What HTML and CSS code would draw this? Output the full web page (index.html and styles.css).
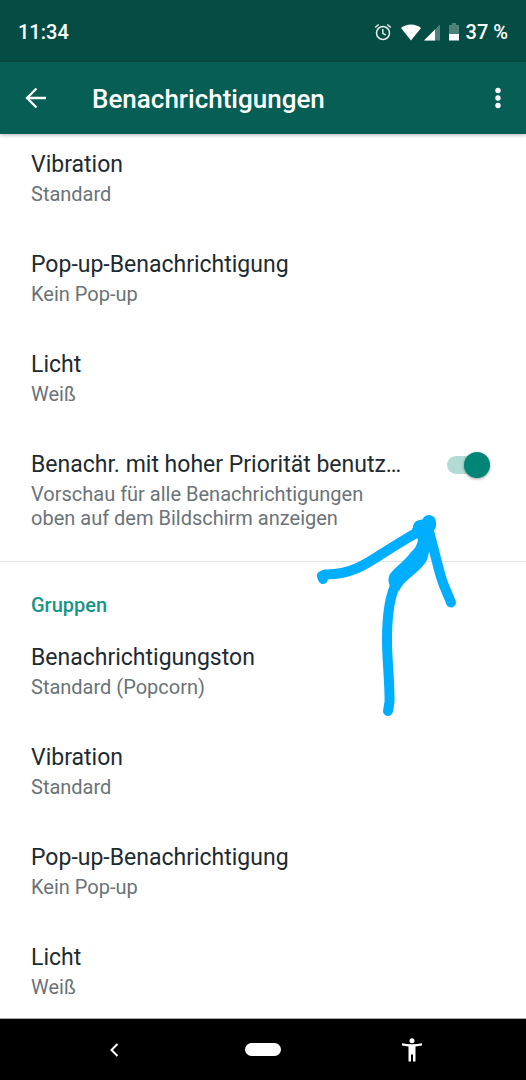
FILE: index.html
```html
<!DOCTYPE html>
<html lang="de">
<head>
<meta charset="utf-8">
<meta name="viewport" content="width=device-width, initial-scale=1">
<title>Benachrichtigungen</title>
<link rel="stylesheet" href="styles.css">
</head>
<body>
<div class="status-bar">
  <span class="clock">11:34</span>
  <div class="status-icons">
    <svg class="alarm" width="18" height="18" viewBox="0 0 18 18" fill="none" stroke="#e6efee" stroke-width="1.5" aria-hidden="true">
      <circle cx="9" cy="10" r="6.5"/><path d="M8.8 6v4.4l3 1.8M1.2 4.5l3.500-3M16.800 4.500l-3.500-3"/>
    </svg>
    <svg class="wifi" width="20" height="17" viewBox="0 0 20 17" aria-hidden="true"><path fill="#fff" d="M10 16.500 0 4Q4 .5 10 .5T20 4z"/></svg>
    <svg class="signal" width="16" height="17" viewBox="0 0 16 17" aria-hidden="true"><path fill="#fff" fill-opacity=".3" d="M16 .5V16.500H0z"/><path fill="#fff" d="M11 5.500v11H0z"/></svg>
    <svg class="battery" width="10" height="18" viewBox="0 0 10 18" aria-hidden="true"><path fill="#fff" fill-opacity=".3" d="M3 0h4v2h3v10H0V2h3z"/><path fill="#fff" d="M0 11h10v6.500H0z"/></svg>
    <span class="level">37 %</span>
  </div>
</div>
<header class="app-bar">
  <button class="icon-button" type="button" aria-label="Zurück">
    <svg width="22" height="22" viewBox="0 0 22 22" fill="none" stroke="#fff" stroke-width="2.300" aria-hidden="true"><path d="M21 11H2.500M11.500 1.500 2 11l9.500 9.500"/></svg>
  </button>
  <h1 class="app-title">Benachrichtigungen</h1>
  <button class="icon-button" type="button" aria-label="Weitere Optionen">
    <svg width="6" height="22" viewBox="0 0 6 22" fill="#fff" aria-hidden="true"><circle cx="3" cy="3.500" r="2.700"/><circle cx="3" cy="11" r="2.700"/><circle cx="3" cy="18.500" r="2.700"/></svg>
  </button>
</header>
<main class="settings">
  <section class="group group-first">
    <button class="row" type="button"><span class="title">Vibration</span><span class="summary">Standard</span></button>
    <button class="row" type="button"><span class="title">Pop-up-Benachrichtigung</span><span class="summary">Kein Pop-up</span></button>
    <button class="row" type="button"><span class="title">Licht</span><span class="summary">Weiß</span></button>
    <label class="row switch-row" for="priority">
      <span class="row-text"><span class="title">Benachr. mit hoher Priorität benutz…</span><span class="summary">Vorschau für alle Benachrichtigungen oben auf dem Bildschirm anzeigen</span></span>
      <input class="switch" id="priority" type="checkbox" role="switch" checked>
    </label>
  </section>
  <section class="group">
    <h2 class="group-title">Gruppen</h2>
    <button class="row" type="button"><span class="title">Benachrichtigungston</span><span class="summary">Standard (Popcorn)</span></button>
    <button class="row" type="button"><span class="title">Vibration</span><span class="summary">Standard</span></button>
    <button class="row" type="button"><span class="title">Pop-up-Benachrichtigung</span><span class="summary">Kein Pop-up</span></button>
    <button class="row" type="button"><span class="title">Licht</span><span class="summary">Weiß</span></button>
  </section>
  <svg class="scribble" width="150" height="210" viewBox="312 510 150 210" fill="none" stroke="#00aeff" stroke-width="10" stroke-linecap="round" stroke-linejoin="round" aria-hidden="true">
    <path d="M323 579 322 576 325 574.500C350 575 365 565 384 552.500 398 544 410 536 420 531"/>
    <path stroke-width="14" d="M429 522 429 525 420 527"/>
    <path d="M429 531C434 550 437 563 441 577 444 587 447 592 451 602.500"/>
    <path d="M388 711 389.500 702C390 685 387 660 387 640 387 618 389 596 397 582"/>
    <path fill="#00aeff" stroke="none" d="M412 528 418 540C417 545 415 549 411 552 405 561 396 566 390 574 387 579 389 585 391 588L399 591C404 581 413 576 420 569 425 564 427 561 428 556L434 535 433 522z"/>
  </svg>
</main>
<nav class="nav-bar" aria-label="Systemnavigation">
  <button class="nav-button" type="button" aria-label="Zurück"><svg width="10" height="14" viewBox="0 0 10 14" fill="none" stroke="#fff" stroke-width="2" aria-hidden="true"><path d="M8.500 1 2.500 7l6 6"/></svg></button>
  <button class="nav-button" type="button" aria-label="Startbildschirm"><span class="pill"></span></button>
  <button class="nav-button" type="button" aria-label="Bedienungshilfen"><svg width="20" height="24" viewBox="0 0 20 24" fill="#fff" aria-hidden="true"><circle cx="10" cy="2.800" r="2.500"/><path d="M0 5.200Q10 7.200 20 5.200V7.500L13.500 8.500V23.500H11V16.500H9V23.500H6.500V8.500L0 7.500z"/></svg></button>
</nav>
</body>
</html>
```
FILE: styles.css
```css
* { box-sizing: border-box; }
body {
  margin: 0;
  min-height: 100vh;
  display: flex;
  flex-direction: column;
  background: #fff;
  color: #1d2b31;
  font-family: Roboto, "Liberation Sans", sans-serif;
}
button {
  border: 0;
  padding: 0;
  background: none;
  color: inherit;
  font: inherit;
  text-align: left;
}
svg { display: block; flex: none; }
.status-bar {
  display: flex;
  align-items: center;
  justify-content: space-between;
  height: 62px;
  padding: 2px 18px 0;
  background: #054d44;
  color: #fff;
  font-size: 20px;
  font-weight: 500;
}
.status-icons { display: flex; align-items: center; }
.wifi { margin-left: 9px; }
.signal { margin-left: 3px; }
.battery { margin-left: 9px; }
.level { margin-left: 7px; }
.app-bar {
  position: relative;
  display: flex;
  align-items: center;
  height: 72px;
  padding: 0 25px;
  background: #075e54;
  color: #fff;
  box-shadow: 0 1px 4px rgba(0, 0, 0, 0.3);
}
.app-title {
  flex: 1;
  margin: 0 0 0 45px;
  padding-top: 2px;
  font-size: 26px;
  font-weight: 500;
  line-height: 32px;
}
.settings { position: relative; flex: 1; }
.group-first { margin-top: -8px; padding-bottom: 11px; border-bottom: 1px solid #e4e4e4; }
.row {
  display: block;
  width: 100%;
  padding: 22px 31px 20px;
}
.title, .summary { display: block; }
.title {
  overflow: hidden;
  white-space: nowrap;
  text-overflow: ellipsis;
  font-size: 23px;
  line-height: 34px;
}
.summary { color: #6a7378; font-size: 20px; line-height: 24px; }
.switch-row { display: flex; align-items: flex-start; gap: 36px; }
.row-text { flex: 1; min-width: 0; }
.switch {
  appearance: none;
  display: flex;
  align-items: center;
  justify-content: flex-end;
  width: 43px;
  height: 18px;
  margin: 8px 5px 0 0;
  border-radius: 9px;
  background: #b2dbd6;
}
.switch::before {
  content: "";
  width: 26px;
  height: 26px;
  flex: none;
  border-radius: 50%;
  background: #008577;
  box-shadow: 0 1px 3px rgba(0, 0, 0, 0.4);
}
.switch:not(:checked) { justify-content: flex-start; }
.group-title {
  margin: 0;
  padding: 29px 31px 0;
  color: #189586;
  font-size: 20px;
  font-weight: 500;
  line-height: 28px;
}
.scribble { position: absolute; left: 312px; top: 376px; pointer-events: none; }
.nav-bar {
  position: relative;
  display: grid;
  grid-template-columns: repeat(3, 149px);
  justify-content: center;
  height: 62px;
  margin-top: -1px;
  border-top: 1px solid #aaa;
  background: #000;
}
.nav-button { display: flex; align-items: center; justify-content: center; }
.pill { width: 36px; height: 13px; border-radius: 7px; background: #fff; }
```
